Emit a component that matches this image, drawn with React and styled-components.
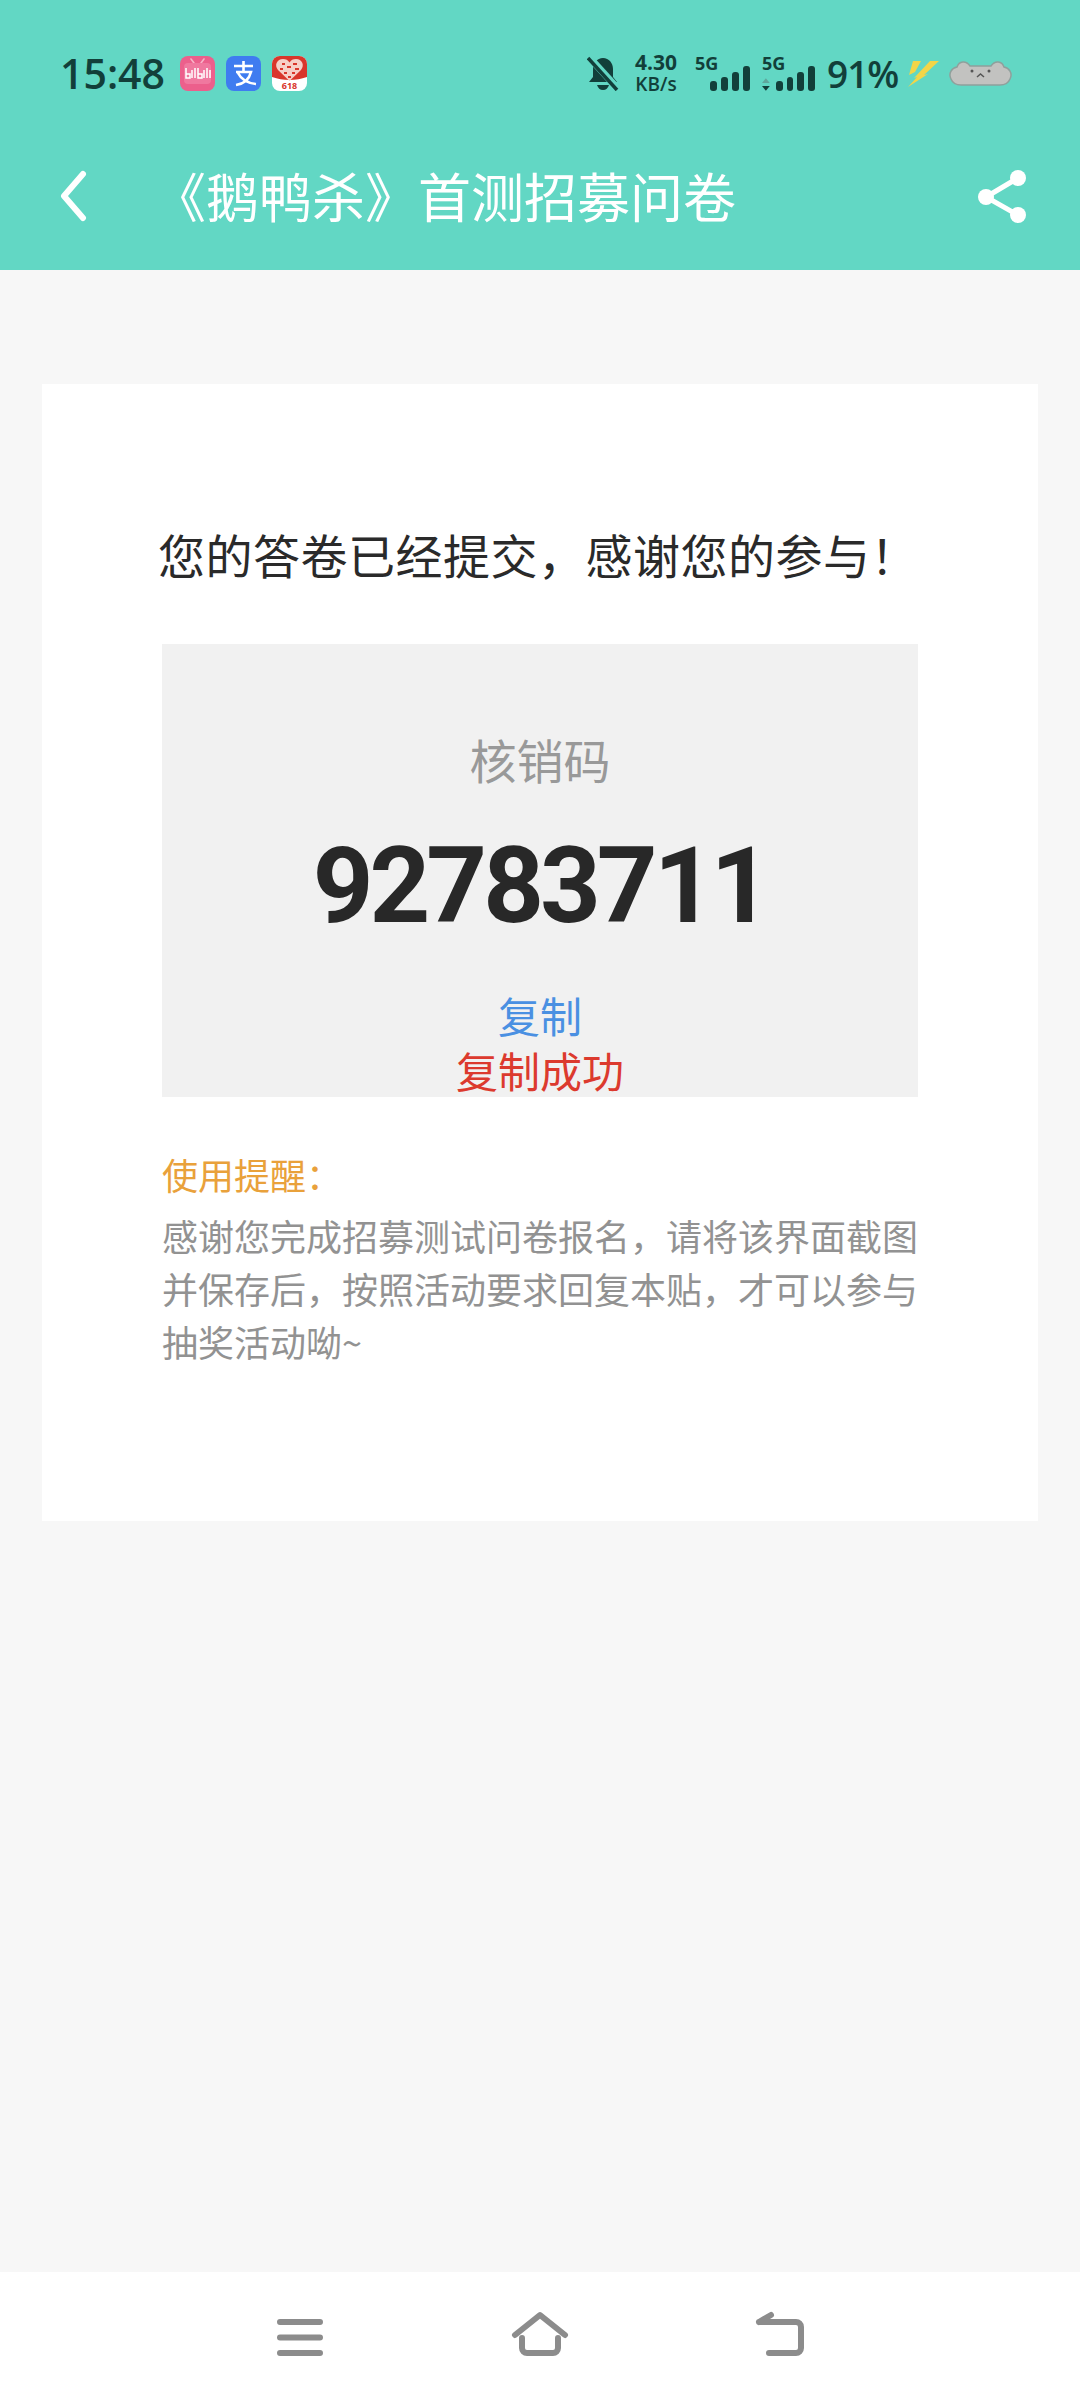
import React from "react";
import styled, { createGlobalStyle } from "styled-components";

const GlobalStyle = createGlobalStyle`
  html, body {
    margin: 0;
    padding: 0;
    background: #f7f7f7;
  }
  body {
    font-family: "Noto Sans CJK SC", sans-serif;
  }
`;

const Page = styled.div`
  width: 1080px;
  height: 2400px;
  display: flex;
  flex-direction: column;
  background: #f7f7f7;
  overflow: hidden;
`;

const Header = styled.header`
  height: 270px;
  background: #62d7c4;
  flex-shrink: 0;
  display: flex;
  flex-direction: column;
`;

const StatusBar = styled.div`
  height: 146px;
  box-sizing: border-box;
  padding: 51px 67px 0 60px;
  display: flex;
  align-items: flex-start;
  justify-content: space-between;
  color: #123f3a;
`;

const StatusGroup = styled.div`
  height: 44px;
  display: flex;
  align-items: center;
`;

const Clock = styled.span`
  font-family: "Open Sans", sans-serif;
  font-size: 41px;
  font-weight: 600;
  width: 120px;
  white-space: nowrap;
`;

const AppIcon = styled.svg`
  width: 35px;
  height: 35px;
  margin-right: 11px;
`;

const BellIcon = styled.svg`
  width: 32px;
  height: 35px;
`;

const NetSpeed = styled.div`
  width: 46px;
  margin: 0 16px 0 14px;
  display: flex;
  flex-direction: column;
  align-items: center;
  font-family: "Open Sans", sans-serif;
  font-weight: 700;
  font-size: 21px;
  line-height: 22px;
  white-space: nowrap;
`;

const NetUnit = styled.div`
  font-size: 19px;
  font-weight: 600;
`;

const Signal = styled.div`
  position: relative;
  width: ${(p) => p.$width}px;
  height: 36px;
  margin-right: 12px;
  display: flex;
  align-items: flex-end;
  justify-content: flex-end;
  gap: 4px;
`;

const SignalLabel = styled.span`
  position: absolute;
  left: 0;
  top: -3px;
  font-family: "Open Sans", sans-serif;
  font-weight: 700;
  font-size: 18px;
  line-height: 22px;
`;

const SignalBar = styled.i`
  width: 7px;
  height: ${(p) => p.$h}px;
  border-radius: 3px;
  background: #123f3a;
`;

const SignalArrows = styled.svg`
  width: 8px;
  height: 13px;
  margin-right: 2px;
`;

const Battery = styled.span`
  font-family: "Open Sans", sans-serif;
  font-size: 37px;
  font-weight: 600;
  width: 70px;
  margin-right: 10px;
  letter-spacing: -1px;
  white-space: nowrap;
`;

const BoltIcon = styled.svg`
  width: 32px;
  height: 27px;
  margin-right: 9px;
`;

const CloudIcon = styled.svg`
  width: 65px;
  height: 26px;
`;

const NavRow = styled.div`
  height: 124px;
  display: flex;
  align-items: flex-start;
  padding: 0 54px 0 58px;
`;

const BackButton = styled.svg`
  width: 30px;
  height: 54px;
  flex-shrink: 0;
  margin-top: 24px;
`;

const Title = styled.h1`
  flex: 1;
  margin: 12px 0 0 65px;
  font-weight: 400;
  font-size: 53px;
  line-height: 74px;
  color: #fff;
  white-space: nowrap;
`;

const ShareButton = styled.svg`
  width: 48px;
  height: 53px;
  margin-top: 24px;
  flex-shrink: 0;
`;

const Main = styled.main`
  flex: 1;
  padding: 114px 42px 0;
`;

const Card = styled.section`
  background: #fff;
  height: 1137px;
  box-sizing: border-box;
  padding: 140px 120px 0 116px;
`;

const Thanks = styled.p`
  margin: 0 0 60px;
  font-size: 47px;
  letter-spacing: 0.5px;
  line-height: 60px;
  color: #2a2a2a;
  white-space: nowrap;
`;

const CodeBox = styled.div`
  margin-left: 4px;
  width: 756px;
  height: 453px;
  background: #f1f1f1;
  display: flex;
  flex-direction: column;
  align-items: center;
`;

const CodeLabel = styled.div`
  margin-top: 85px;
  font-size: 47px;
  line-height: 60px;
  color: #999;
`;

const CodeValue = styled.div`
  margin-top: 37px;
  font-family: "Roboto", sans-serif;
  font-size: 106px;
  letter-spacing: -4px;
  line-height: 120px;
  font-weight: 700;
  color: #282828;
`;

const CopyLink = styled.div`
  margin-top: ${(p) => (p.$success ? 1 : 42)}px;
  font-size: 42px;
  line-height: 54px;
  color: ${(p) => (p.$success ? "#dc3a2e" : "#4a90e2")};
`;

const Notice = styled.div`
  margin: 50px 0 0 4px;
  width: 760px;
  font-size: 36px;
  line-height: 53px;
  color: #929292;
`;

const NoticeTitle = styled.div`
  margin-bottom: 8px;
  line-height: 54px;
  color: #e9a13b;
`;

const BottomBar = styled.nav`
  height: 128px;
  flex-shrink: 0;
  background: #fff;
  display: flex;
  justify-content: center;
  gap: 180px;
`;

const NavIcon = styled.svg`
  width: 60px;
  height: 60px;
  margin-top: 38px;
`;

function Bilibili() {
  return (
    <AppIcon viewBox="0 0 35 35">
      <rect width="35" height="35" rx="8" fill="#ec5f8c" />
      <path d="M11 3l3 4M24 3l-3 4" stroke="#f7b4c8" strokeWidth="1.6" strokeLinecap="round" />
      <rect x="4" y="7" width="27" height="21" rx="4" fill="#f0789f" />
      <path d="M6 12v10h4v-4H6M12 14v8M15 12v10M18 12v10h4v-4h-4M24 14v8M27 12v10M30 14v8" stroke="#fff" strokeWidth="1.5" fill="none" />
    </AppIcon>
  );
}

function Alipay() {
  return (
    <AppIcon viewBox="0 0 35 35">
      <rect width="35" height="35" rx="8" fill="#3f7cf0" />
      <path d="M8 10h19M17.5 5v10M10 16h15c-2 8-8 12-15 13M12 17c3 6 9 10 18 11" stroke="#fff" strokeWidth="2.6" fill="none" />
    </AppIcon>
  );
}

function Pinduoduo() {
  return (
    <AppIcon viewBox="0 0 35 35">
      <rect width="35" height="35" rx="8" fill="#fff" />
      <path d="M0 8a8 8 0 0 1 8-8h19a8 8 0 0 1 8 8v13c-6 2-11 3-17.5 3S6 23 0 21z" fill="#d9362b" />
      <path d="M17.5 25L6 14C2 9 5 3 11 3c3 0 5 1 6.5 3.5C19 4 21 3 24 3c6 0 9 6 5 11z" fill="#f6cfc8" />
      <path d="M10 8h3M21 8h4M8 13h3M15 11h4M23 13h4M12 17h3M20 17h3M16 21h3" stroke="#d9362b" strokeWidth="2" />
      <text x="17.5" y="33" textAnchor="middle" fontFamily="Open Sans, sans-serif" fontSize="9" fontWeight="700" fill="#d9362b">
        618
      </text>
    </AppIcon>
  );
}

function MutedBell() {
  return (
    <BellIcon viewBox="0 0 32 35">
      <path d="M16 2C10 2 6 7 6 13v8l-4 5h28l-4-5v-8c0-6-4-11-10-11z" fill="#123f3a" />
      <path d="M10 29h12c-1 3-3 5-6 5s-5-2-6-5z" fill="#123f3a" />
      <path d="M2 1l30 33" stroke="#62d7c4" strokeWidth="7" />
      <path d="M1 2l29 32" stroke="#123f3a" strokeWidth="3.5" />
    </BellIcon>
  );
}

function Bolt() {
  return (
    <BoltIcon viewBox="0 0 32 27">
      <path d="M6 1h8L8 12l-6 3z" fill="#f2d548" />
      <path d="M23 1h9L17 15l4-1L1 27l9-10-3 1z" fill="#f2d548" />
    </BoltIcon>
  );
}

function CloudCat() {
  return (
    <CloudIcon viewBox="0 0 65 26">
      <path
        d="M3 19C0 13 4 8 9 7c2-6 9-7 13-1h21c4-6 11-5 13 1 5 1 9 6 6 12-2 5-6 6-10 6H13c-4 0-8-1-10-6z"
        fill="#c2c2c0"
        stroke="#8fa09c"
        strokeWidth="1.5"
      />
      <circle cx="24" cy="11" r="1.5" fill="#555" />
      <circle cx="41" cy="11" r="1.5" fill="#555" />
      <path d="M29 17l3.5-3 3.5 3" stroke="#555" strokeWidth="1.5" fill="none" />
    </CloudIcon>
  );
}

function SignalIcon({ width, arrows }) {
  return (
    <Signal $width={width}>
      <SignalLabel>5G</SignalLabel>
      {arrows && (
        <SignalArrows viewBox="0 0 8 13">
          <path d="M4 0l4 5H0z" fill="#5fa79c" />
          <path d="M4 13l4-5H0z" fill="#123f3a" />
        </SignalArrows>
      )}
      {[10, 14, 19, 25].map((h) => (
        <SignalBar key={h} $h={h} />
      ))}
    </Signal>
  );
}

export default function App() {
  return (
    <Page>
      <GlobalStyle />
      <Header>
        <StatusBar>
          <StatusGroup>
            <Clock>15:48</Clock>
            <Bilibili />
            <Alipay />
            <Pinduoduo />
          </StatusGroup>
          <StatusGroup>
            <MutedBell />
            <NetSpeed>
              4.30
              <NetUnit>KB/s</NetUnit>
            </NetSpeed>
            <SignalIcon width={55} />
            <SignalIcon width={53} arrows />
            <Battery>91%</Battery>
            <Bolt />
            <CloudCat />
          </StatusGroup>
        </StatusBar>
        <NavRow>
          <BackButton viewBox="0 0 30 54">
            <path d="M25 4L6 26l19 22" stroke="#fff" strokeWidth="6" strokeLinecap="round" strokeLinejoin="round" fill="none" />
          </BackButton>
          <Title>《鹅鸭杀》首测招募问卷</Title>
          <ShareButton viewBox="0 0 48 53">
            <path d="M40 8L8 27l32 18" stroke="#fff" strokeWidth="5" fill="none" />
            <circle cx="40" cy="8" r="8" fill="#fff" />
            <circle cx="8" cy="27" r="8" fill="#fff" />
            <circle cx="40" cy="45" r="8" fill="#fff" />
          </ShareButton>
        </NavRow>
      </Header>
      <Main>
        <Card>
          <Thanks>您的答卷已经提交，感谢您的参与！</Thanks>
          <CodeBox>
            <CodeLabel>核销码</CodeLabel>
            <CodeValue>92783711</CodeValue>
            <CopyLink>复制</CopyLink>
            <CopyLink $success>复制成功</CopyLink>
          </CodeBox>
          <Notice>
            <NoticeTitle>使用提醒：</NoticeTitle>
            感谢您完成招募测试问卷报名，请将该界面截图并保存后，按照活动要求回复本贴，才可以参与抽奖活动呦~
          </Notice>
        </Card>
      </Main>
      <BottomBar>
        <NavIcon viewBox="0 0 60 60">
          <path d="M10 12h40M10 27.5h40M10 43h40" stroke="#8c8c8c" strokeWidth="6" strokeLinecap="round" />
        </NavIcon>
        <NavIcon viewBox="0 0 60 60">
          <path d="M5 25L30 5l25 20M12 28v10a5 5 0 0 0 5 5h26a5 5 0 0 0 5-5V28" stroke="#8c8c8c" strokeWidth="6" strokeLinecap="round" strokeLinejoin="round" fill="none" />
        </NavIcon>
        <NavIcon viewBox="0 0 60 60">
          <path d="M9 12h37a5 5 0 0 1 5 5v21a5 5 0 0 1-5 5H19M21 5L9 12" stroke="#8c8c8c" strokeWidth="6" strokeLinecap="round" strokeLinejoin="round" fill="none" />
        </NavIcon>
      </BottomBar>
    </Page>
  );
}
